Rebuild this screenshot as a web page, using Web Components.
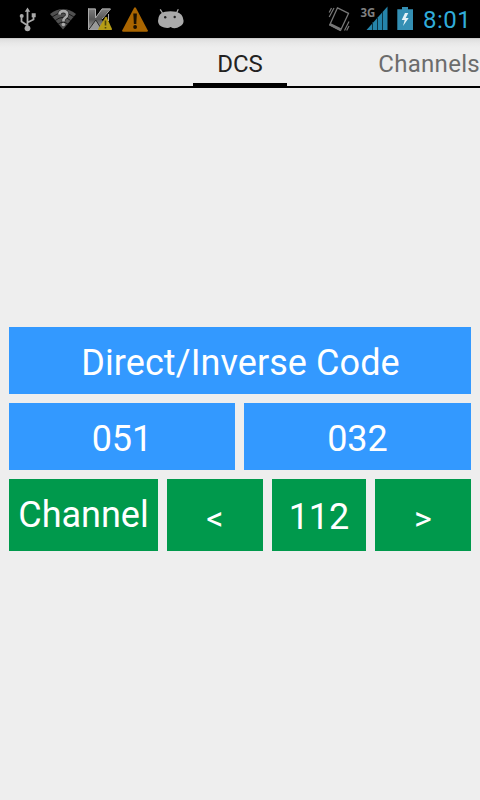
<!DOCTYPE html>
<html lang="en">
<head>
<meta charset="utf-8">
<title>DCS</title>
<style>
    html, body { margin: 0; height: 100%; background: #eee; overflow: hidden; }
    body { font-family: Roboto, "Noto Sans", sans-serif; }
</style>
</head>
<body>
<dcs-app></dcs-app>

<script>
class StatusBar extends HTMLElement {
    constructor() {
        super();
        this.attachShadow({ mode: "open" });

        this.shadowRoot.innerHTML = `
            <style>
                :host {
                    display: flex; justify-content: space-between;
                    height: 38px; flex: none; background: #000;
                }
                .group { display: flex; }
                .clock {
                    width: 57px; padding-left: 3px; line-height: 40px; font-size: 24px;
                    color: #30acda; letter-spacing: 0.5px;
                }
                svg { display: block; }
            </style>
            <div class="group">
                <svg width="190" height="38" viewBox="0 0 190 38">
                    <!-- usb -->
                    <g fill="none" stroke="#aaa" stroke-width="1.8">
                        <path d="M27.500 11v17M27.500 25.500l-6-4v-4M27.500 22.500l6-3v-3"/>
                    </g>
                    <path d="M27.500 7.500l-2.700 4.300h5.400zM31.700 13.300h4v4h-4z" fill="#aaa"/>
                    <circle cx="21.700" cy="16" r="2" fill="#aaa"/>
                    <circle cx="27.500" cy="28.300" r="2.900" fill="#aaa"/>
                    <!-- wifi -->
                    <path d="M50 14Q63 4 76 14L63 29.500z" fill="#505050"/>
                    <path d="M52 17Q63 8.500 74 17M55 20.700Q63 14 71 20.700M58 24.200Q63 20 68 24.200" fill="none" stroke="#181818" stroke-width="1"/>
                    <path d="M59.400 14.600q.3-3.500 3.900-3.500 3.900 0 3.900 3.300 0 1.900-2 3.200-1.800 1.200-1.800 3.800" fill="none" stroke="#222" stroke-width="3.800"/>
                    <path d="M59.400 14.600q.3-3.500 3.900-3.500 3.900 0 3.900 3.300 0 1.900-2 3.200-1.800 1.200-1.800 3.800" fill="none" stroke="#aaa" stroke-width="2.600"/>
                    <circle cx="63.400" cy="24.500" r="1.800" fill="#aaa"/>
                    <!-- antivirus -->
                    <defs>
                        <linearGradient id="k" x1="0" y1="0" x2="0" y2="1">
                            <stop offset="0" stop-color="#808080"/>
                            <stop offset=".5" stop-color="#555"/>
                            <stop offset="1" stop-color="#aaa"/>
                        </linearGradient>
                    </defs>
                    <path d="M88 8.500h7.500v9l6.500-9h8.500L101.500 19l6.500 11H88z" fill="url(#k)"/>
                    <path d="M88.800 29.500l7-9.500 6 9.500" fill="#999" stroke="#2a2a2a" stroke-width="1"/>
                    <path d="M88 9h7.500v9L102 9h8.500l-8.500 10M88.500 8.500v21M108.500 14v7" fill="none" stroke="#aaa" stroke-width="1"/>
                    <path d="M105.300 17.300q.7-1 1.400 0L112 29q.2 1-.8 1H98.800q-1 0-.6-1z" fill="#b69d16"/>
                    <path d="M105.500 20.500v5M105.500 27v1.600" stroke="#51470a" stroke-width="1.600"/>
                    <!-- warning -->
                    <path d="M134 8q1-1.600 2 0l11.700 22.300q.5 1.500-1 1.500H123.300q-1.500 0-1-1.500z" fill="#a96500"/>
                    <path d="M133.300 13.500h3.600l-.6 10.500h-2.400z" fill="#1c1100"/>
                    <circle cx="135.100" cy="27" r="1.900" fill="#1c1100"/>
                    <!-- android head -->
                    <path d="M162.500 13l-2.300-3.700M176.500 13l1.800-3.700" stroke="#aaa" stroke-width="1.300"/>
                    <path d="M158 21q0-8 7-9.300 5.500-1 11 0 7 1.500 7.600 9 0 3.500-3.500 5.500-5 3.500-9.500.8-2.300 1.700-6.500.5-6-1.300-6.100-6.500z" fill="#aaa"/>
                    <circle cx="165.200" cy="17.300" r="1.200" fill="#222"/>
                    <circle cx="174.700" cy="17" r="1.200" fill="#222"/>
                </svg>
            </div>
            <div class="group">
                <svg width="95" height="38" viewBox="325 0 95 38">
                    <!-- vibrate -->
                    <g fill="none" stroke="#777">
                        <path d="M337.500 7.800L348.600 13.300 340.500 30.500 329.700 25z" stroke-width="1.300" stroke-linejoin="round"/>
                        <path d="M329.200 12.500l2.300-4.500M329.200 17l4.800-9M349 21.500l-4.500 9M349 26l-2.300 4.500" stroke-width="1.200"/>
                    </g>
                    <path d="M330.300 23l10.800 5.300-1 2.700-11-5.800z" fill="#777"/>
                    <!-- signal -->
                    <text x="360.400" y="16.700" font-family="Open Sans, sans-serif" font-size="12.500" font-weight="700" textLength="14.800" lengthAdjust="spacingAndGlyphs" fill="#808080">3G</text>
                    <path d="M387.500 6.500V30H366.500z" fill="#2584aa"/>
                    <path d="M372.500 22v8M377.500 17v13M382.500 12v18" stroke="#0b3444" stroke-width="1"/>
                    <!-- battery -->
                    <path d="M402 7h6v2.300h5V30H397.300V9.300H402z" fill="#348fb4"/>
                    <path d="M405 13l-3.300 7 3 .1-1.700 6 5.700-8-3-.2 2.600-4.900z" fill="#e4f2f7"/>
                </svg>
                <div class="clock">8:01</div>
            </div>
        `;
    }
}

class TabStrip extends HTMLElement {
    constructor() {
        super();
        this.attachShadow({ mode: "open" });

        this.shadowRoot.innerHTML = `
            <style>
                :host {
                    display: grid; grid-template: 48px / 193px 94px 1fr;
                    height: 50px; box-sizing: border-box; flex: none;
                    border-bottom: 2px solid #000; font-size: 24px; line-height: 52px;
                    background: linear-gradient(#bbb 0, #dedede 1px, #e8e8e8 5px, #eee 10px);
                }
                .current {
                    grid-column: 2; text-align: center; color: #222;
                    box-shadow: inset 0 -3px #000;
                }
                .next { text-align: right; color: #6c6c6c; white-space: nowrap; letter-spacing: 0.3px; }
            </style>
            <div class="current"><slot name="current"></slot></div>
            <div class="next"><slot name="next"></slot></div>
        `;
    }
}

class CodeButton extends HTMLElement {
    constructor() {
        super();
        this.attachShadow({ mode: "open" });

        this.shadowRoot.innerHTML = `
            <style>
                :host {
                    display: flex; align-items: center; justify-content: center;
                    background: #39f; color: #fff; font-size: 36px; line-height: 42px;
                    height: 67px; box-sizing: border-box; padding-top: 4px;
                    white-space: nowrap; cursor: pointer;
                }
                :host([green]) { background: #00994c; height: 72px; }
                :host([label]) { padding: 0; }
                :host([arrow]) { font-size: 34px; padding-top: 6px; }
            </style>
            <span><slot></slot></span>
        `;
    }
}

class DcsApp extends HTMLElement {
    constructor() {
        super();
        this.attachShadow({ mode: "open" });

        this.shadowRoot.innerHTML = `
            <style>
                :host { display: flex; flex-direction: column; height: 100vh; background: #eee; }
                main {
                    flex: 1; display: flex; flex-direction: column;
                    justify-content: center; gap: 9px; padding: 0 9px 10px;
                }
                .title { letter-spacing: 0.08px; padding-left: 1px; }
                .row { display: grid; gap: 9px; }
                .codes { grid-template-columns: 226px 227px; }
                .channel { grid-template-columns: 149px 96px 94px 96px; }
            </style>
            <status-bar></status-bar>
            <tab-strip>
                <span slot="current">DCS</span>
                <span slot="next">Channels</span>
            </tab-strip>
            <main>
                <code-button class="title">Direct/Inverse Code</code-button>
                <div class="row codes">
                    <code-button>051</code-button>
                    <code-button>032</code-button>
                </div>
                <div class="row channel">
                    <code-button green label>Channel</code-button>
                    <code-button green arrow>&lt;</code-button>
                    <code-button green>112</code-button>
                    <code-button green arrow>&gt;</code-button>
                </div>
            </main>
        `;
    }
}

customElements.define("status-bar", StatusBar);
customElements.define("tab-strip", TabStrip);
customElements.define("code-button", CodeButton);
customElements.define("dcs-app", DcsApp);
</script>
</body>
</html>
